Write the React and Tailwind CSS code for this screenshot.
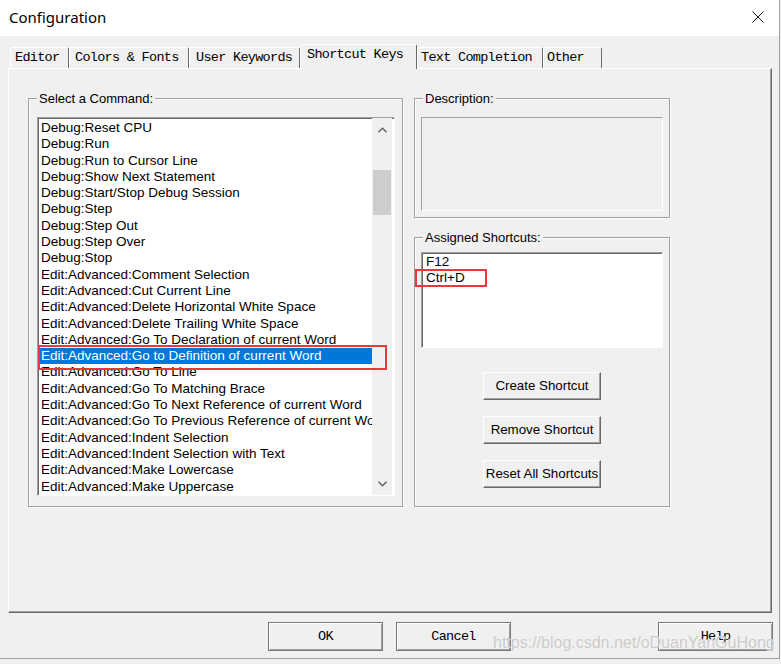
import { useState } from 'react'

const commands = [
  'Debug:Reset CPU',
  'Debug:Run',
  'Debug:Run to Cursor Line',
  'Debug:Show Next Statement',
  'Debug:Start/Stop Debug Session',
  'Debug:Step',
  'Debug:Step Out',
  'Debug:Step Over',
  'Debug:Stop',
  'Edit:Advanced:Comment Selection',
  'Edit:Advanced:Cut Current Line',
  'Edit:Advanced:Delete Horizontal White Space',
  'Edit:Advanced:Delete Trailing White Space',
  'Edit:Advanced:Go To Declaration of current Word',
  'Edit:Advanced:Go to Definition of current Word',
  'Edit:Advanced:Go To Line',
  'Edit:Advanced:Go To Matching Brace',
  'Edit:Advanced:Go To Next Reference of current Word',
  'Edit:Advanced:Go To Previous Reference of current Word',
  'Edit:Advanced:Indent Selection',
  'Edit:Advanced:Indent Selection with Text',
  'Edit:Advanced:Make Lowercase',
  'Edit:Advanced:Make Uppercase',
]

const tabs = [
  { label: 'Editor', cls: 'w-[59px] pl-[4px]' },
  { label: 'Colors & Fonts', cls: 'w-[120px] pl-[5px]' },
  { label: 'User Keywords', cls: 'w-[111px] pl-[6px]' },
  { label: 'Shortcut Keys', cls: 'w-[117px] pl-[6px]', active: true },
  { label: 'Text Completion', cls: 'w-[126px] pl-[3px]' },
  { label: 'Other', cls: 'w-[59px] pl-[3px]' },
]

const mono = "font-['Liberation_Mono','Courier_New',monospace] text-[13.5px] tracking-[-0.7px]"

function GroupBox({ label, className, children }) {
  return (
    <div className={`relative border border-[#a0a0a0] shadow-[inset_1px_1px_0_#fff,1px_1px_0_#fff] ${className}`}>
      <span className="absolute left-[8px] top-[-8px] px-[2px] bg-[#f0f0f0] text-[13px] leading-[15px]">
        {label}
      </span>
      {children}
    </div>
  )
}

function Chevron({ down }) {
  return (
    <svg width="9" height="6" viewBox="0 0 9 6">
      <polyline
        points={down ? '0.5,0.8 4.5,4.8 8.5,0.8' : '0.5,5.2 4.5,1.2 8.5,5.2'}
        fill="none"
        stroke="#606060"
        strokeWidth="1.4"
      />
    </svg>
  )
}

function SideButton({ children }) {
  return (
    <button className="w-[118px] h-[28px] bg-[#f0f0f0] border border-t-white border-l-white border-r-[#696969] border-b-[#696969] shadow-[inset_-1px_-1px_0_#a0a0a0] text-[13.3px] leading-[26px] text-black">
      {children}
    </button>
  )
}

function DialogButton({ children, className = '' }) {
  return (
    <button className={`w-[115px] h-[29px] bg-[#f0f0f0] border border-[#7a7a7a] shadow-[inset_1px_1px_0_#fff,inset_-1px_-1px_0_#a0a0a0] ${mono} leading-[27px] text-black ${className}`}>
      {children}
    </button>
  )
}

export default function App() {
  const [selected, setSelected] = useState(14)

  return (
    <div className="relative w-[781px] h-[664px] overflow-hidden bg-[#f0f0f0] font-['Liberation_Sans',Arial,sans-serif] text-black">
      <div className="w-[780px] h-[659px] border-r border-b border-[#a0a0a0] flex flex-col">
        {/* Title bar */}
        <div className="h-[36px] shrink-0 bg-white flex items-center justify-between pl-[9px] pr-[15px] pb-[2px]">
          <span className="font-['Noto_Sans',sans-serif] text-[15px]">Configuration</span>
          <svg width="12" height="12" viewBox="0 0 12 12">
            <path d="M0.5 0.5 L11.5 11.5 M11.5 0.5 L0.5 11.5" stroke="#111" strokeWidth="1" />
          </svg>
        </div>

        {/* Tabs */}
        <div className="h-[32px] shrink-0 flex items-end pl-[10px]">
          {tabs.map(t =>
            t.active ? (
              <div
                key={t.label}
                className={`relative z-10 h-[25px] -mb-[1px] bg-[#f0f0f0] border-t border-l border-white border-r border-r-[#696969] rounded-t-[2px] whitespace-nowrap ${mono} leading-[19px] ${t.cls}`}
              >
                {t.label}
              </div>
            ) : (
              <div
                key={t.label}
                className={`h-[21px] bg-[#f0f0f0] border-t border-l border-white border-r border-r-[#696969] rounded-t-[2px] whitespace-nowrap ${mono} leading-[19px] ${t.cls}`}
              >
                {t.label}
              </div>
            )
          )}
        </div>

        {/* Tab panel */}
        <div className="w-[764px] h-[545px] ml-[8px] shrink-0 bg-[#f0f0f0] border border-t-white border-l-white border-r-[#696969] border-b-[#696969] shadow-[inset_-1px_-1px_0_#a0a0a0] flex pt-[29px] pl-[19px]">
          <GroupBox label="Select a Command:" className="w-[375px] h-[409px] pt-[18px] pl-[8px]">
            <div className="w-[358px] h-[379px] bg-white border border-t-[#a0a0a0] border-l-[#a0a0a0] border-r-white border-b-white shadow-[inset_1px_1px_0_#696969] flex">
              <div className="flex-1 pt-[2px] pl-[2px] overflow-hidden">
                {commands.map((c, i) => (
                  <div
                    key={c}
                    onClick={() => setSelected(i)}
                    className={`h-[16.3px] leading-[16.3px] px-[1px] whitespace-nowrap text-[13.5px] ${
                      i === selected ? 'bg-[#0078d7] text-white' : 'text-black'
                    }`}
                  >
                    {c}
                  </div>
                ))}
              </div>
              <div className="w-[20px] mr-[2px] bg-[#f0f0f0] flex flex-col">
                <div className="h-[24px] flex items-center justify-center">
                  <Chevron />
                </div>
                <div className="mt-[28px] h-[45px] mx-[1px] bg-[#cdcdcd]" />
                <div className="flex-1" />
                <div className="h-[22px] flex items-center justify-center">
                  <Chevron down />
                </div>
              </div>
            </div>
          </GroupBox>

          <div className="ml-[11px] w-[256px] flex flex-col">
            <GroupBox label="Description:" className="h-[120px] pt-[18px] px-[6px]">
              <div className="h-[94px] border border-t-[#a0a0a0] border-l-[#a0a0a0] border-r-white border-b-white" />
            </GroupBox>

            <GroupBox label="Assigned Shortcuts:" className="mt-[19px] h-[270px] pt-[14px] px-[6px]">
              <div className="h-[96px] bg-white border border-t-[#a0a0a0] border-l-[#a0a0a0] border-r-white border-b-white shadow-[inset_1px_1px_0_#696969] pl-[4px] pt-[1px]">
                <div className="h-[16.3px] leading-[16.3px] text-[13.5px]">F12</div>
                <div className="h-[16.3px] leading-[16.3px] text-[13.5px]">Ctrl+D</div>
              </div>
              <div className="mt-[24px] flex flex-col items-center gap-[16px]">
                <SideButton>Create Shortcut</SideButton>
                <SideButton>Remove Shortcut</SideButton>
                <SideButton>Reset All Shortcuts</SideButton>
              </div>
            </GroupBox>
          </div>
        </div>

        {/* Dialog buttons */}
        <div className="mt-[9px] flex pl-[268px]">
          <DialogButton>OK</DialogButton>
          <DialogButton className="ml-[13px]">Cancel</DialogButton>
          <DialogButton className="ml-[147px]">Help</DialogButton>
        </div>
      </div>

      {/* Annotations */}
      <div className="absolute left-[38px] top-[345px] w-[349px] h-[25px] border-[2.5px] border-[#e8383a]" />
      <div className="absolute left-[415px] top-[269px] w-[72px] h-[18px] border-[2.5px] border-[#e8383a]" />
      <div className="absolute left-[493px] top-[634px] text-[16px] leading-[18px] text-[#cacaca] [text-shadow:0_0_1px_#fff] whitespace-nowrap">
        https://blog.csdn.net/oDuanYanGuHong
      </div>
    </div>
  )
}
